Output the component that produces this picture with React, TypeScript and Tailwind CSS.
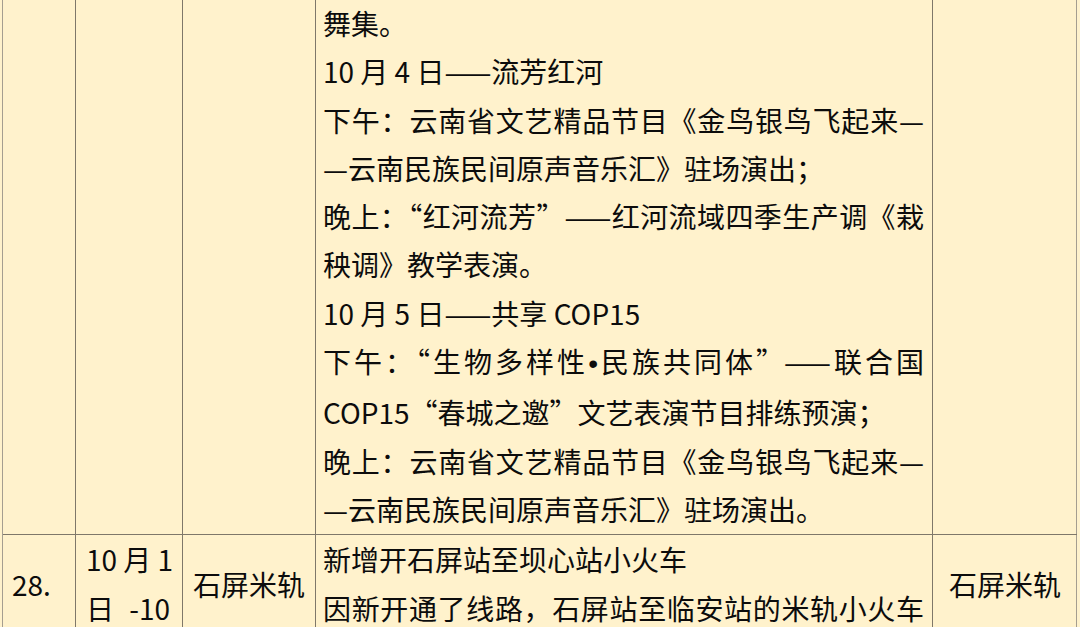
const font = {
  fontFamily: '"Noto Sans CJK SC", "Noto Sans", sans-serif',
};

// lines of the long programme cell; `full` lines are stretched to the cell width
const programme: { text: React.ReactNode; full?: boolean }[] = [
  { text: "舞集。" },
  { text: "10 月 4 日——流芳红河" },
  { text: "下午：云南省文艺精品节目《金鸟银鸟飞起来—", full: true },
  { text: "—云南民族民间原声音乐汇》驻场演出；" },
  { text: "晚上：“红河流芳”——红河流域四季生产调《栽", full: true },
  { text: "秧调》教学表演。" },
  { text: "10 月 5 日——共享 COP15" },
  {
    text: (
      <>
        下午：“生物多样性
        <span className="font-['Liberation_Sans']">•</span>
        民族共同体”——联合国
      </>
    ),
    full: true,
  },
  { text: "COP15“春城之邀”文艺表演节目排练预演；" },
  { text: "晚上：云南省文艺精品节目《金鸟银鸟飞起来—", full: true },
  { text: "—云南民族民间原声音乐汇》驻场演出。" },
];

const railway: { text: React.ReactNode; full?: boolean }[] = [
  { text: "新增开石屏站至坝心站小火车" },
  { text: "因新开通了线路，石屏站至临安站的米轨小火车", full: true },
];

function Lines({ lines }: { lines: { text: React.ReactNode; full?: boolean }[] }) {
  return (
    <>
      {lines.map((l, i) => (
        <div
          key={i}
          className={`whitespace-nowrap ${
            l.full ? "text-justify [text-align-last:justify]" : ""
          }`}
        >
          {l.text}
        </div>
      ))}
    </>
  );
}

export default function App() {
  return (
    <div
      className="w-[1080px] h-[627px] overflow-hidden bg-[#fff2cc] text-[#0c0c0c] text-[28px] leading-[48.3px]"
      style={font}
    >
      <div className="ml-[2px] w-[1075px] grid grid-cols-[72px_107px_133px_617px_145px] border-l border-r border-[#a59e90]">
        {/* row 27 (tail) */}
        <div />
        <div className="border-l border-[#7f786a]" />
        <div className="border-l border-[#7f786a]" />
        <div className="border-l border-[#7f786a] pl-[7px] pr-[8px] -mt-[1px] pb-[1px]">
          <Lines lines={programme} />
        </div>
        <div className="border-l border-[#7f786a]" />

        {/* row 28 */}
        <div className="border-t border-[#7f786a] flex items-center pl-[9px] pb-[2px]">
          28.
        </div>
        <div className="border-t border-l border-[#7f786a] pl-[10px] pr-[12px]">
          <div className="whitespace-pre text-justify [text-align-last:justify]">10 月 1</div>
          <div className="whitespace-pre text-justify [text-align-last:justify]">日 -10</div>
        </div>
        <div className="border-t border-l border-[#7f786a] flex items-center justify-center pb-[2px]">
          石屏米轨
        </div>
        <div className="border-t border-l border-[#7f786a] pl-[7px] pr-[8px] pb-[4px]">
          <Lines lines={railway} />
        </div>
        <div className="border-t border-l border-[#7f786a] flex items-center justify-center pb-[2px]">
          石屏米轨
        </div>
      </div>
    </div>
  );
}
